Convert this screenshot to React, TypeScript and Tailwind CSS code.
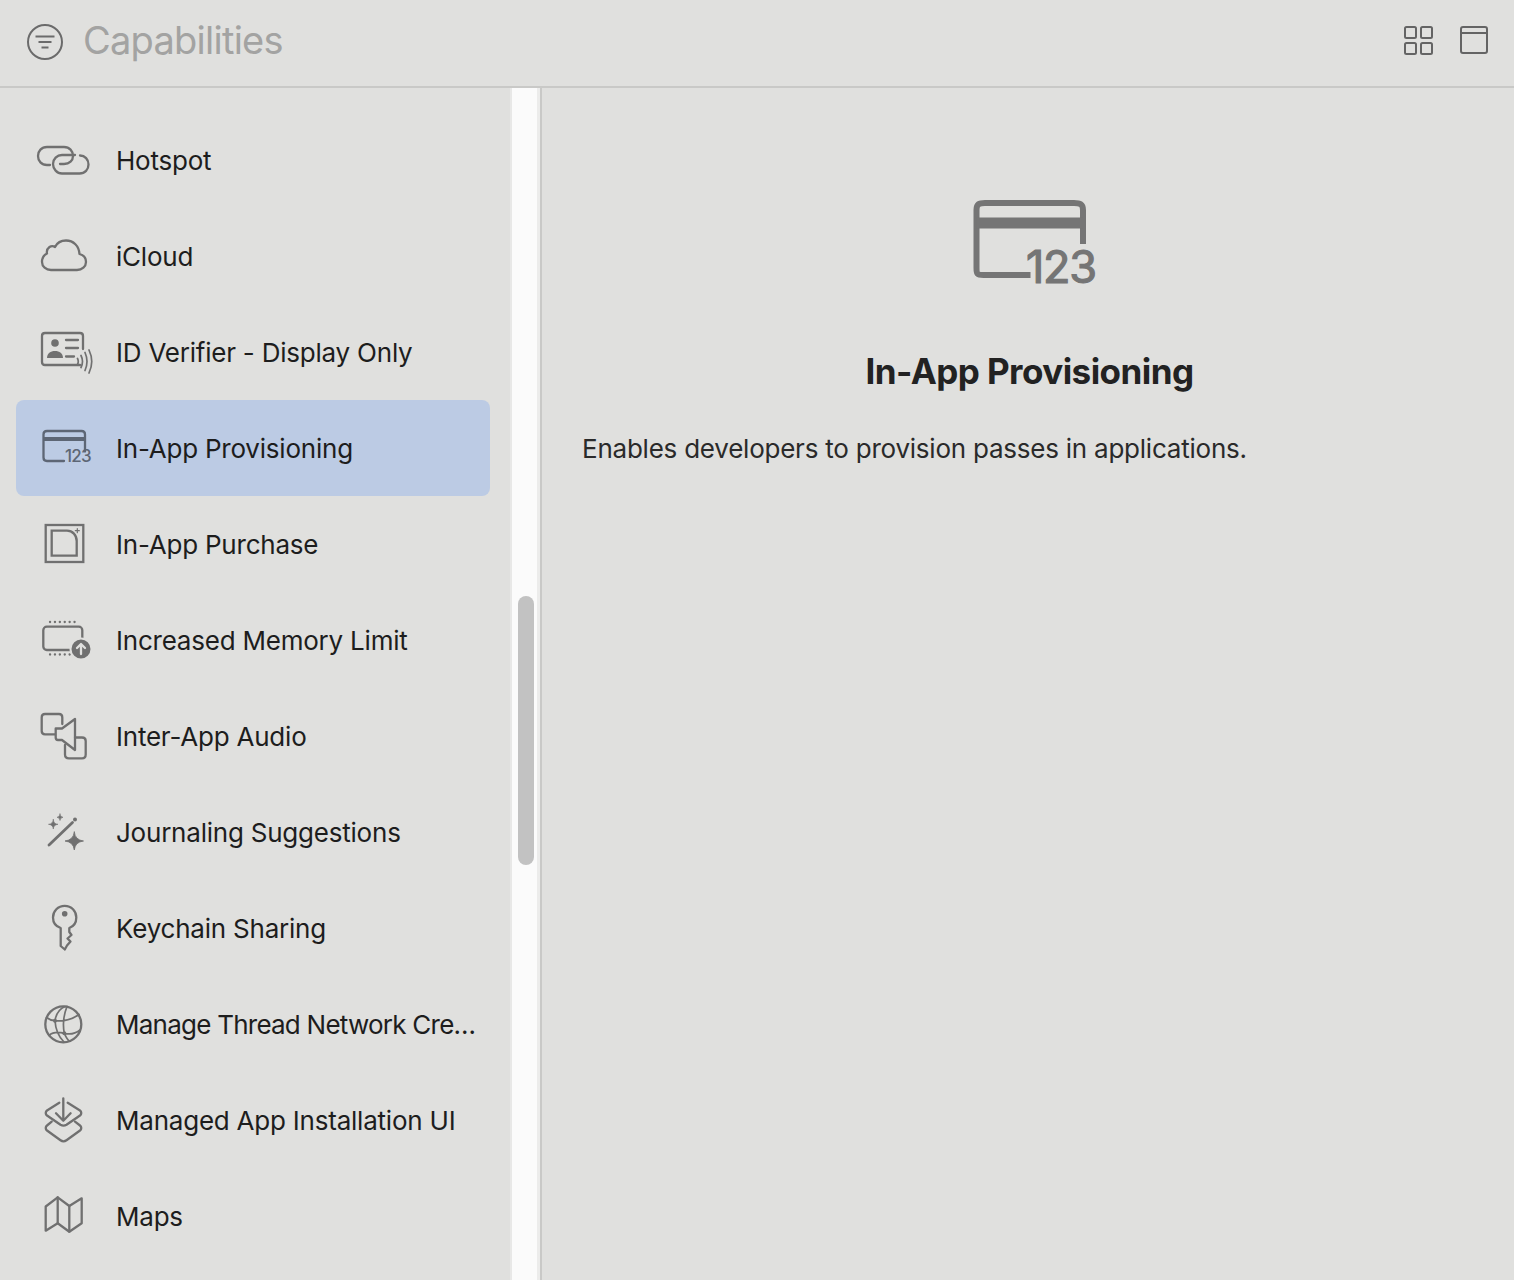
import type { ReactNode } from "react";

const font = "font-['Inter','Liberation_Sans',sans-serif]";

function Glyph({ children }: { children: ReactNode }) {
  return (
    <svg
      width="60"
      height="60"
      viewBox="0 0 60 60"
      fill="none"
      stroke="currentColor"
      strokeWidth="2.3"
      strokeLinecap="round"
      strokeLinejoin="round"
      className="mt-[2px] shrink-0"
    >
      {children}
    </svg>
  );
}

const rows: { label: string; icon: ReactNode; selected?: boolean; narrow?: boolean }[] = [
  {
    label: "Hotspot",
    icon: (
      <Glyph>
        <path d="M16 34H13C7.5 34 4 30 4 25S7.5 16 13 16H30C35.5 16 39 20 39 25C39 29.5 35.5 33 30 33H26" />
        <path d="M41 24H28C23 24 19 28 19 33S23 42.5 28 42.5H45.5C51 42.5 54.5 38.5 54.5 33.5S51 24.5 46 24.5" />
      </Glyph>
    ),
  },
  {
    label: "iCloud",
    icon: (
      <Glyph>
        <path d="M17 43H43C48 43 52 39.5 52 35C52 31 49.5 28 45.5 27C45 19 39.5 13.5 32 13.5C27 13.5 23 16 21 20C19.5 19 17 19 15.5 20C13.5 21.5 12.5 24 13 26.5C10 28 8 31 8 35C8 39.5 12 43 17 43Z" />
      </Glyph>
    ),
  },
  {
    label: "ID Verifier - Display Only",
    icon: (
      <Glyph>
        <path d="M49 26V13C49 11 48 10 46 10H11C9 10 8 11 8 13V39C8 41 9 42 11 42H46" />
        <circle cx="21" cy="20" r="3.8" fill="currentColor" stroke="none" />
        <path d="M13 35C13 30.5 16.5 28 21 28S29 30.5 29 35Z" fill="currentColor" stroke="none" />
        <path d="M32 17H44M32 25H44M32 33.5H40" />
        <path d="M43.5 35.5Q45 38.5 43.5 41.5M47 32.5Q50 38.5 47 44.5M51 29.5Q55 38.5 51 47.5M55 27Q60.5 38.5 55 50" strokeWidth="1.7" />
      </Glyph>
    ),
  },
  {
    label: "In-App Provisioning",
    selected: true,
    icon: (
      <Glyph>
        <path d="M30 42H13C10.500 42 9.500 41 9.500 38.500V15.500C9.500 13 10.500 12 13 12H47.500C50 12 51 13 51 15.500V32.500" />
        <path d="M9.500 20H51" strokeWidth="4" strokeLinecap="butt" />
        <text x="31" y="43" fill="currentColor" stroke="none" fontFamily="Inter, sans-serif" fontSize="17" fontWeight="500" letterSpacing="-0.800">
          123
        </text>
      </Glyph>
    ),
  },
  {
    label: "In-App Purchase",
    icon: (
      <Glyph>
        <rect x="11.700" y="10" width="37.600" height="37" strokeLinejoin="miter" />
        <path d="M17.700 15.700H33C38.500 15.700 42.700 20 42.700 26V40.700H17.700Z" strokeLinejoin="miter" />
        <path d="M41.300 15.700H45.300M43.300 13.700V17.700" strokeWidth="1.200" />
      </Glyph>
    ),
  },
  {
    label: "Increased Memory Limit",
    icon: (
      <Glyph>
        <rect x="9.300" y="15.700" width="39" height="23.300" rx="3.500" />
        <path d="M16 11H41M16 43.500H36" strokeDasharray="0.100 4.800" />
        <circle cx="47" cy="38" r="10.500" fill="currentColor" stroke="#e0e0de" strokeWidth="2" />
        <path d="M47 43V33.500M43 37L47 33L51 37" stroke="#e0e0de" />
      </Glyph>
    ),
  },
  {
    label: "Inter-App Audio",
    icon: (
      <Glyph>
        <path d="M21 27.300H11C8.800 27.300 7.700 26 7.700 24V10.500C7.700 8.300 8.800 7 11 7H25C27.200 7 28.300 8.300 28.300 10.500V17" />
        <path d="M21.700 21.500H28L41 12V43L28 33H24C22.500 33 21.700 32 21.700 30.500Z" />
        <path d="M41 30.500H48C50.500 30.500 51.700 31.800 51.700 34V47.500C51.700 50 50.500 51.300 48 51.300H35C32.300 51.300 31 50 31 47.500V38" />
      </Glyph>
    ),
  },
  {
    label: "Journaling Suggestions",
    icon: (
      <Glyph>
        <path d="M15 42L38.500 19.500" strokeWidth="2.800" />
        <circle cx="41" cy="16.500" r="2" fill="currentColor" stroke="none" />
        <path d="M40.300 29Q41 37 49.500 38Q41 39 40.300 47Q39.500 39 31 38Q39.500 37 40.300 29Z" fill="currentColor" strokeWidth="0.800" />
        <path d="M19.300 16.500Q19.500 21 24 21.300Q19.500 21.700 19.300 26Q19 21.700 14.500 21.300Q19 21 19.300 16.500Z" fill="currentColor" strokeWidth="0.600" />
        <path d="M26 11Q26.200 14 29 14.300Q26.200 14.600 26 17.500Q25.800 14.600 23 14.300Q25.800 14 26 11Z" fill="currentColor" strokeWidth="0.600" />
      </Glyph>
    ),
  },
  {
    label: "Keychain Sharing",
    icon: (
      <Glyph>
        <path d="M26.700 29C22 27.500 19 23.500 19 18.500C19 12 24 6.800 30.700 6.800S42.300 12 42.300 18.500C42.300 23.500 39.500 27.500 35.300 29V33L37.500 36L33.500 39.500L36.500 42.500L33 46.500L30.800 50.500L26.700 47Z" />
        <circle cx="30.700" cy="14.700" r="2.800" fill="currentColor" stroke="none" />
      </Glyph>
    ),
  },
  {
    label: "Manage Thread Network Cre…",
    narrow: true,
    icon: (
      <Glyph>
        <circle cx="29.300" cy="29.300" r="18" />
        <path d="M21 25.700C22 19 25 14 31 11.500M21 25.700C21.500 34 24 41 30 47M30.300 38.300C28.500 29 30 19 33 11.500M30.300 38.300C32 42 33.500 45 35.500 46M12.500 22.500C15 24.500 18 25.500 21 25.700C29 26.500 38 24.500 45 19.500M15 40.500C19.500 36.500 25 37 30.300 38.300C35 39.500 41 39 46 35" strokeWidth="1.700" />
        <circle cx="21" cy="25.700" r="2" fill="currentColor" stroke="none" />
        <circle cx="30.300" cy="38.300" r="2" fill="currentColor" stroke="none" />
      </Glyph>
    ),
  },
  {
    label: "Managed App Installation UI",
    icon: (
      <Glyph>
        <path d="M25.300 11.700L13 19.500C11.300 20.800 11.300 23.200 13 24.500L26.500 33.800C28.500 35 30.500 35 32.500 33.800L46 24.500C47.700 23.200 47.700 20.800 46 19.500L33.700 11.700" />
        <path d="M17.700 30.700L13 34.500C11.300 35.800 11.300 38.200 13 39.500L26.500 49.300C28.500 50.700 30.500 50.700 32.500 49.300L46 39.500C47.700 38.200 47.700 35.800 46 34.500L41 30.700" />
        <path d="M29.300 7.300V29.700M22 22.300L29.300 29.700L36.600 22.300" />
      </Glyph>
    ),
  },
  {
    label: "Maps",
    icon: (
      <Glyph>
        <path d="M11.700 19.500V43.700L23.700 36.300L35.300 44.700L47.700 36.300V11.300L35.300 19L23.700 10.300Z" />
        <path d="M23.700 10.300V36.300M35.300 19V44.700" />
      </Glyph>
    ),
  },
];

export default function App() {
  return (
    <div className={`${font} flex h-[1280px] w-[1514px] flex-col overflow-hidden bg-[#e0e0de]`}>
      {/* Toolbar */}
      <header className="flex h-[88px] shrink-0 items-center border-b-2 border-[#c9c9c7] pb-[6px] pl-[26px] pr-[25px]">
        <svg width="38" height="38" viewBox="0 0 38 38" fill="none" className="mt-[4px] shrink-0 text-[#6b6b6b]" stroke="currentColor">
          <circle cx="19" cy="19" r="17" strokeWidth="2" />
          <path d="M9.500 13.500H28.500M12.500 19H25.500M15.500 24.500H22.500" strokeWidth="2" />
        </svg>
        <h1 className="ml-[19px] text-[38px] leading-[46px] tracking-[-0.75px] text-[#a3a3a2]">Capabilities</h1>
        <div className="ml-auto flex items-center gap-[26px]">
          <svg width="30" height="30" viewBox="0 0 30 30" fill="none" stroke="#646464" strokeWidth="2">
            <rect x="2" y="2" width="11" height="11" rx="1.500" />
            <rect x="18" y="2" width="11" height="11" rx="1.500" />
            <rect x="2" y="18" width="11" height="11" rx="1.500" />
            <rect x="18" y="18" width="11" height="11" rx="1.500" />
          </svg>
          <svg width="30" height="30" viewBox="0 0 30 30" fill="none" stroke="#646464" strokeWidth="2">
            <rect x="2" y="2" width="26" height="26" rx="2" />
            <path d="M2 8H28" />
          </svg>
        </div>
      </header>

      <div className="flex min-h-0 flex-1">
        {/* Sidebar */}
        <aside className="w-[510px] shrink-0 overflow-hidden pl-[16px] pr-[20px] pt-[24px]">
          {rows.map((row) => (
            <div
              key={row.label}
              className={`flex h-[96px] items-center gap-[22px] rounded-[8px] pl-[18px] ${
                row.selected ? "bg-[#bccbe4] text-[#5d6675]" : "text-[#707070]"
              }`}
            >
              {row.icon}
              <span
                className={`whitespace-nowrap text-[26px] text-[#1d1d1d] ${
                  row.narrow ? "tracking-[-0.76px]" : "tracking-[-0.22px]"
                }`}
              >
                {row.label}
              </span>
            </div>
          ))}
        </aside>

        {/* Scroll gutter */}
        <div className="w-[32px] shrink-0 border-r-2 border-[#c9c9c7]">
          <div className="h-full border-l-2 border-r-[3px] border-l-[#e8e8e7] border-r-[#ececeb] bg-[#fbfbfb] pl-[6px] pt-[508px]">
            <div className="h-[269px] w-[16px] rounded-full bg-[#c2c2c2]" />
          </div>
        </div>

        {/* Detail */}
        <main className="flex min-w-0 flex-1 flex-col pl-[40px] pr-[37px] pt-[110px]">
          <svg width="134" height="100" viewBox="0 0 134 100" fill="none" stroke="#757575" strokeWidth="6" className="self-center">
            <path d="M67.500 77H20.500C14 77 13.500 76 13.500 70V12C13.500 6 16 5 22 5H111C117 5 120 6 120 12V46" strokeLinejoin="round" />
            <path d="M13.500 25H120" strokeWidth="11" />
            <text x="63" y="85" fill="#757575" stroke="#757575" strokeWidth="1.200" fontFamily="Inter, sans-serif" fontSize="45" letterSpacing="-1.200">
              123
            </text>
          </svg>
          <h2 className="mt-[48px] text-center text-[35px] font-bold leading-[50px] tracking-[-0.55px] text-[#222222]">In-App Provisioning</h2>
          <p className="mt-[37px] text-[26px] leading-[32px] tracking-[-0.23px] text-[#2a2a2a]">Enables developers to provision passes in applications.</p>
        </main>
      </div>
    </div>
  );
}
